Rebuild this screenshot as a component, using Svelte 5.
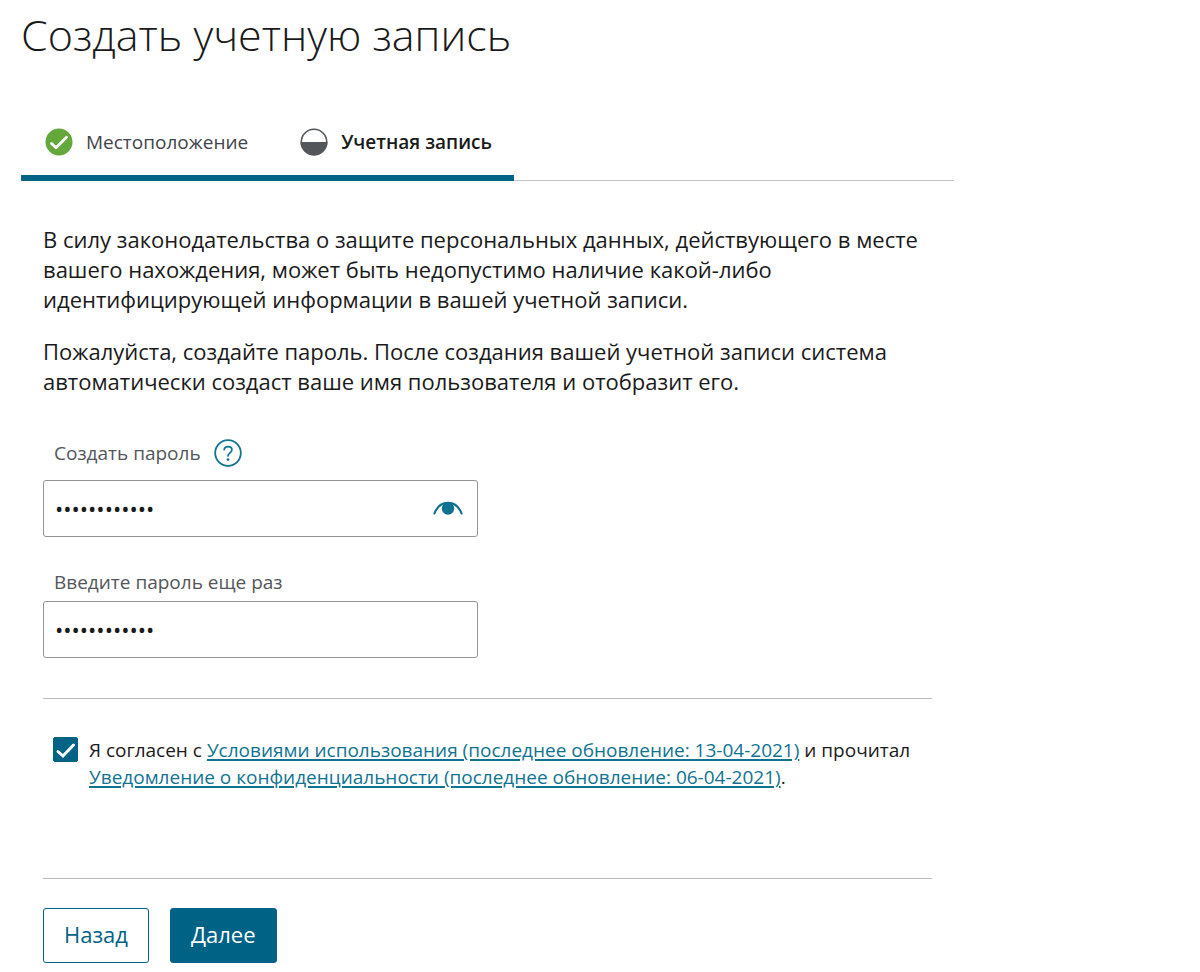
<script>
  let password = $state('abcdefghijkl');
  let repeat = $state('abcdefghijkl');
  let agreed = $state(true);
  let visible = $state(false);
</script>

<main>
  <h1>Создать учетную запись</h1>

  <ol class="steps">
    <li class="step">
      <svg width="28" height="28" viewBox="0 0 28 28" aria-hidden="true">
        <circle cx="14" cy="14" r="13.500" fill="#64a73b" />
        <path d="M6.500 15.500l4.500 4.300L21.500 9.300" fill="none" stroke="#fff" stroke-width="2.800" stroke-linecap="round" stroke-linejoin="round" />
      </svg>
      <span>Местоположение</span>
    </li>
    <li class="step current" aria-current="step">
      <svg width="28" height="28" viewBox="0 0 28 28" aria-hidden="true">
        <circle cx="14" cy="14" r="12.700" fill="#fff" stroke="#53565a" stroke-width="1.600" />
        <path d="M.5 14h27a13.500 13.500 0 0 1-27 0z" fill="#53565a" />
      </svg>
      <span>Учетная запись</span>
    </li>
  </ol>

  <form onsubmit={(e) => e.preventDefault()}>
    <p>В силу законодательства о защите персональных данных, действующего в месте вашего нахождения, может быть недопустимо наличие какой-либо идентифицирующей информации в вашей учетной записи.</p>
    <p>Пожалуйста, создайте пароль. После создания вашей учетной записи система автоматически создаст ваше имя пользователя и отобразит его.</p>

    <div class="label-row first">
      <label for="password">Создать пароль</label>
      <button type="button" class="icon" aria-label="Справка">
        <svg width="28" height="28" viewBox="0 0 28 28" aria-hidden="true">
          <circle cx="14" cy="14" r="12.800" fill="none" stroke="#0f7391" stroke-width="1.800" />
          <path d="M10.200 10.600C10.400 8.600 12 7.600 14 7.600c2.300 0 3.900 1.200 3.900 3.200 0 3-3.900 3.200-3.900 6.200" fill="none" stroke="#0f7391" stroke-width="1.700" stroke-linecap="round" />
          <circle cx="14" cy="20.600" r="1.400" fill="#0f7391" />
        </svg>
      </button>
    </div>
    <div class="field">
      <input id="password" type={visible ? 'text' : 'password'} bind:value={password} />
      <button type="button" class="icon" aria-label="Показать пароль" onclick={() => (visible = !visible)}>
        <svg width="30" height="16" viewBox="0 0 30 16" aria-hidden="true">
          <path d="M1.500 13.500C4 6.500 9 2.800 15 2.800s11 3.700 13.500 10.700" fill="none" stroke="#0f7391" stroke-width="2.200" stroke-linecap="round" />
          <circle cx="15" cy="8.500" r="6.200" fill="#0f7391" />
        </svg>
      </button>
    </div>

    <div class="label-row">
      <label for="repeat">Введите пароль еще раз</label>
    </div>
    <div class="field">
      <input id="repeat" type="password" bind:value={repeat} />
    </div>

    <div class="consent">
      <input id="agree" type="checkbox" bind:checked={agreed} />
      <label for="agree">Я согласен с <a href="#terms">Условиями использования (последнее обновление: 13-04-2021)</a> и прочитал <a href="#privacy">Уведомление о конфиденциальности (последнее обновление: 06-04-2021)</a>.</label>
    </div>

    <div class="actions">
      <button type="button">Назад</button>
      <button type="submit" class="primary">Далее</button>
    </div>
  </form>
</main>

<style>
  :global(body) {
    background: #fff;
  }
  main {
    box-sizing: border-box;
    max-width: 954px;
    padding: 0 0 10px 21px;
    font-family: 'Open Sans', 'Noto Sans', sans-serif;
    color: #1a1a1a;
  }
  h1 {
    margin: 0;
    padding-top: 3px;
    font-size: 43px;
    line-height: 64px;
    font-weight: 300;
  }
  .steps {
    display: flex;
    margin: 37px 0 0;
    padding: 0;
    list-style: none;
    border-bottom: 1px solid #c4c4c4;
  }
  .step {
    display: flex;
    align-items: center;
    gap: 13px;
    box-sizing: border-box;
    height: 77px;
    padding: 4px 28px 0 24px;
    margin-bottom: -1px;
    border-bottom: 6px solid #006285;
    font-size: 19px;
    color: #414449;
  }
  .current {
    padding-right: 22px;
    font-weight: 600;
    color: #1a1a1a;
  }
  svg {
    display: block;
    flex: none;
  }
  form {
    padding: 43px 22px 0;
  }
  p {
    margin: 0 0 22px;
    font-size: 22px;
    line-height: 30px;
  }
  .label-row {
    display: flex;
    align-items: center;
    gap: 13px;
    padding-left: 11px;
    margin: 31px 0 5px;
    font-size: 19px;
    line-height: 28px;
    color: #53565a;
  }
  .first {
    margin: 43px 0 13px;
  }
  .icon {
    padding: 0;
    border: 0;
    background: none;
    cursor: pointer;
  }
  .field {
    display: flex;
    align-items: center;
    box-sizing: border-box;
    max-width: 435px;
    height: 57px;
    padding: 0 14px 2px 11px;
    border: 1px solid #949494;
    border-radius: 3px;
  }
  .field input {
    flex: 1;
    min-width: 0;
    padding: 0;
    border: 0;
    outline: 0;
    background: none;
    font: 22px 'Open Sans', sans-serif;
    color: #1a1a1a;
  }
  .consent {
    display: flex;
    gap: 11px;
    margin-top: 40px;
    padding: 38px 10px 87px;
    border: 1px solid #bbb;
    border-width: 1px 0;
    font-size: 19px;
    line-height: 27px;
  }
  .consent input {
    appearance: none;
    flex: none;
    width: 25px;
    height: 25px;
    margin: 0;
    border: 1px solid #006285;
    border-radius: 2px;
  }
  .consent input:checked {
    background: #006285 url("data:image/svg+xml,%3Csvg xmlns='http://www.w3.org/2000/svg' viewBox='0 0 25 25'%3E%3Cpath d='M5 14.5l5 4.500L20.500 8' fill='none' stroke='white' stroke-width='3' stroke-linecap='round'/%3E%3C/svg%3E") center / 25px no-repeat;
  }
  a {
    color: #0f7391;
    text-decoration-thickness: 2px;
    text-underline-offset: 2px;
  }
  .actions {
    display: flex;
    gap: 21px;
    padding-top: 29px;
  }
  .actions button {
    height: 55px;
    padding: 0 20px 4px;
    border: 1px solid #006285;
    border-radius: 3px;
    background: #fff;
    color: #006285;
    font: 22px 'Open Sans', sans-serif;
  }
  .actions .primary {
    background: #006285;
    color: #fff;
  }
</style>
